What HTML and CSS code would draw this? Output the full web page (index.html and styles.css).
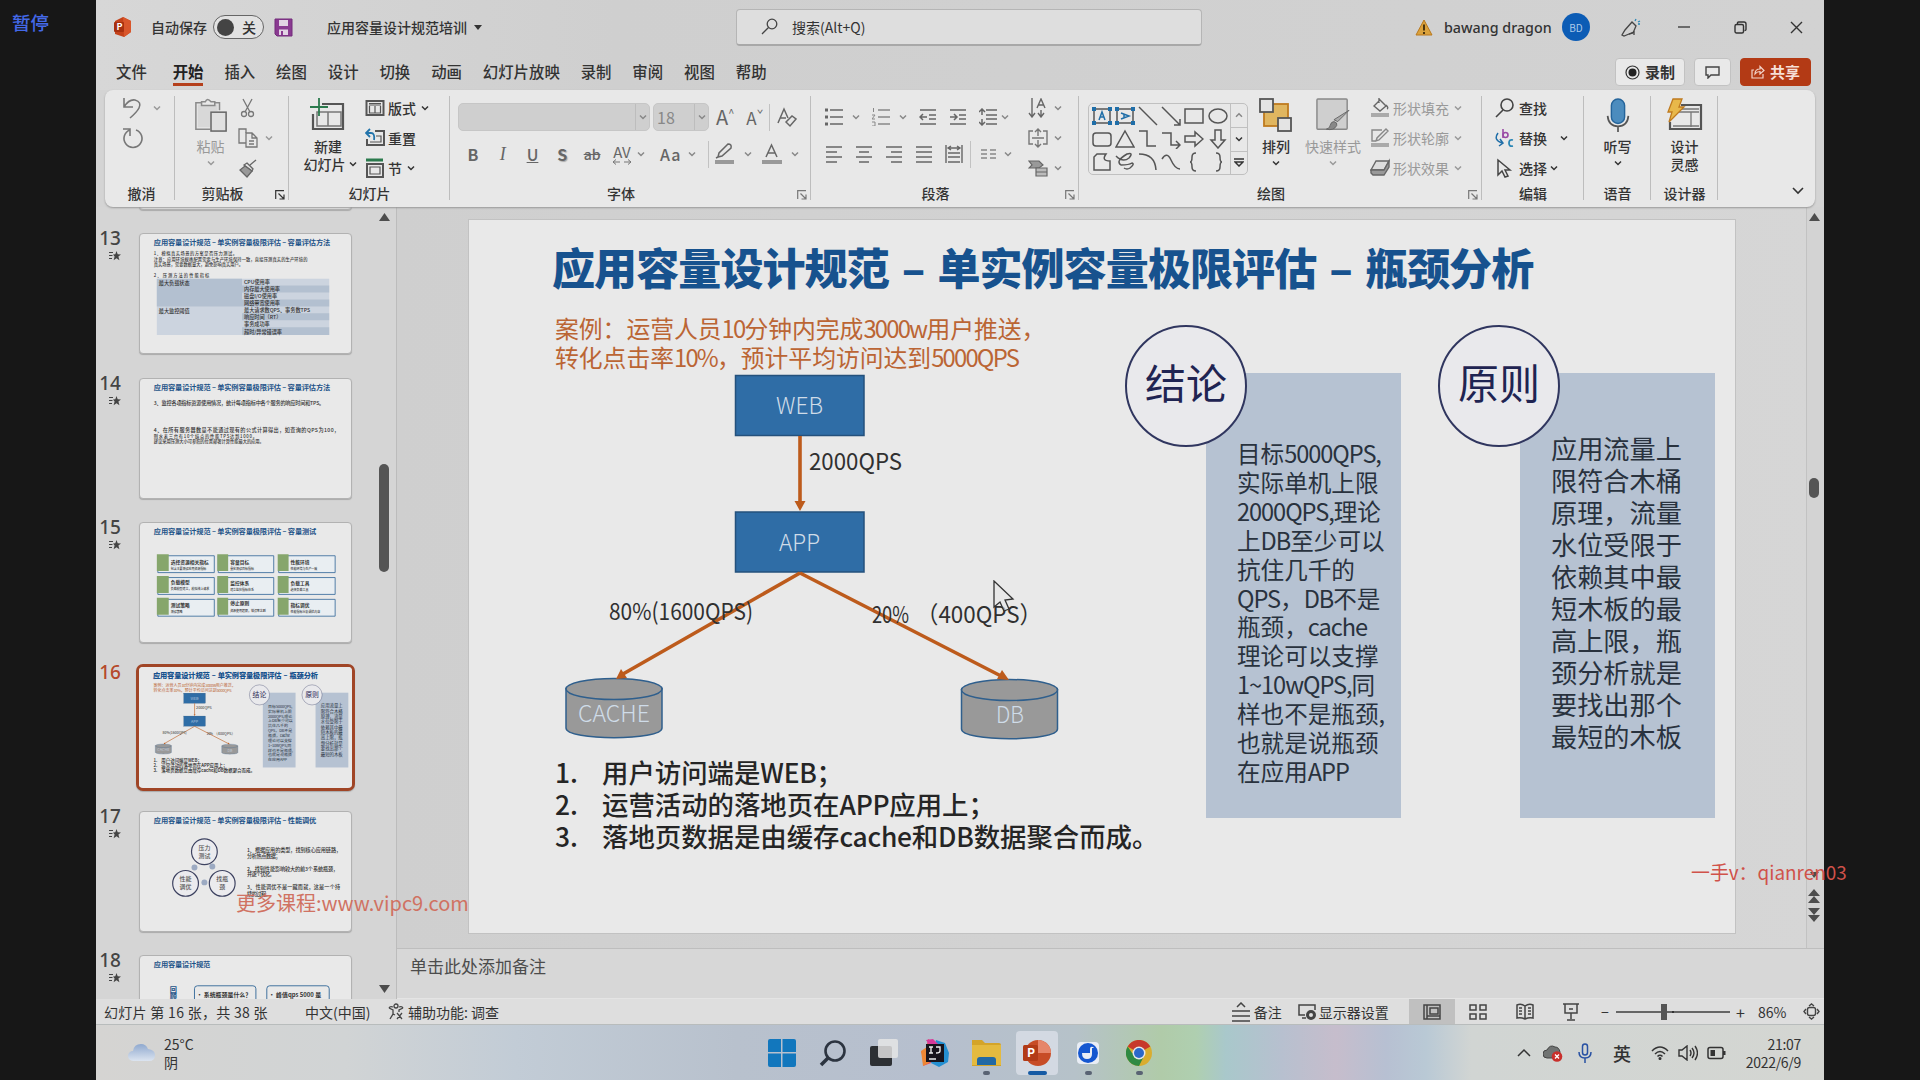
FILE: index.html
```html
<!DOCTYPE html>
<html lang="zh-CN">
<head>
    <meta charset="UTF-8">
    <meta name="viewport" content="width=device-width, initial-scale=1.0">
    <title>应用容量设计规范培训</title>
    <link rel="stylesheet" href="styles.css">
</head>
<body>

    <!-- shared symbols -->
    <svg class="defs">
        <symbol id="chev" viewBox="0 0 8 8"><path d="M1 2.5 4 5.5 7 2.5" fill="none" stroke="currentColor" stroke-width="1.5"/></symbol>
        <symbol id="launch" viewBox="0 0 10 10"><path d="M.7 9V.7H9M3.5 3.5l5 5M9 4.5V9H4.5" fill="none" stroke="currentColor" stroke-width="1.2"/></symbol>
        <symbol id="star" viewBox="0 0 12 10"><path d="M7.5 0l1.2 3.2 3.3.2-2.6 2.1 1 3.7-2.9-2-2.9 2 1-3.7L4 3.4l2.3-.2z" fill="currentColor"/><path d="M0 1.5h4M0 4.5h3.5M0 7.5h3" stroke="currentColor" stroke-width="1"/></symbol>
    </svg>

    <div class="window">
        <header class="titlebar">
            <div class="title-left">
                <svg class="logo" width="20" height="20" viewBox="0 0 20 20"><path d="M10 0l8 4v11l-7 5-9-3V4z" fill="#c4421a"/><path d="M10 0l8 4v11l-7 5z" fill="#d9562b"/><rect x="1" y="5" width="10" height="10" rx="1" fill="#a8300f"/><text x="3.4" y="13.2" font-size="9" font-weight="700" fill="#fff">P</text></svg>
                <span class="autosave">自动保存</span>
                <span class="toggle"><i></i>关</span>
                <svg class="save" width="19" height="19" viewBox="0 0 19 19"><path d="M1 1h17v17H3l-2-2z" fill="#8a3a91" stroke="#722a7a"/><path d="M5 2h9v6H5zM5 11.500h9V17H5z" fill="#e2d3e4"/><path d="M7 13h2v4H7z" fill="#8a3a91"/></svg>
                <span class="doc-name">应用容量设计规范培训</span>
                <svg width="8" height="5" viewBox="0 0 8 5"><path d="M0 0h8L4 5z" fill="#333"/></svg>
            </div>
            <div class="search">
                <svg width="17" height="17" viewBox="0 0 17 17" fill="none" stroke="#444" stroke-width="1.3"><circle cx="11" cy="6" r="4.8"/><path d="M7.500 9.500L1 16"/></svg>
                <span>搜索(Alt+Q)</span>
            </div>
            <div class="title-right">
                <svg class="warn" width="18" height="17" viewBox="0 0 18 17"><path d="M9 1l8 15H1z" fill="#dba23c" stroke="#b9791f"/><path d="M9 5.500v6M9 13v2" stroke="#3c2a0b" stroke-width="1.800"/></svg>
                <span class="user">bawang dragon</span>
                <span class="avatar">BD</span>
                <svg class="pen" width="20" height="19" viewBox="0 0 20 19" fill="none" stroke="#444" stroke-width="1.300"><path d="M11 4l4 4-3 7-4 1-5 2-2-1 3-5z"/><path d="M8 16l5-2v3"/><path d="M14 3l1-2M17 4l2-1M17 6h2" stroke="#2a86b5"/></svg>
                <svg class="min" width="12" height="12" viewBox="0 0 12 12"><path d="M0 6h12" stroke="#333" stroke-width="1.300"/></svg>
                <svg class="max" width="13" height="13" viewBox="0 0 13 13" fill="none" stroke="#333" stroke-width="1.400"><rect x="1" y="3.500" width="8.500" height="8.500" rx="1.500"/><path d="M3.500 3V2q0-1 1-1H10q2 0 2 2v5.500q0 1-1.500 1"/></svg>
                <svg width="13" height="13" viewBox="0 0 13 13"><path d="M1 1l11 11M12 1L1 12" stroke="#333" stroke-width="1.400"/></svg>
            </div>
        </header>

        <nav class="tabs">
            <span>文件</span>
            <span class="active">开始</span>
            <span>插入</span>
            <span>绘图</span>
            <span>设计</span>
            <span>切换</span>
            <span>动画</span>
            <span>幻灯片放映</span>
            <span>录制</span>
            <span>审阅</span>
            <span>视图</span>
            <span>帮助</span>
            <div class="tab-actions">
                <button class="rec"><svg width="15" height="15" viewBox="0 0 15 15"><circle cx="7.500" cy="7.500" r="6.500" fill="none" stroke="#333" stroke-width="1.200"/><circle cx="7.500" cy="7.500" r="4" fill="#222"/></svg>录制</button>
                <button class="comment"><svg width="15" height="13" viewBox="0 0 15 13"><path d="M1 1h13v8H6l-3 3V9H1z" fill="none" stroke="#444" stroke-width="1.400"/></svg></button>
                <button class="share"><svg width="14" height="14" viewBox="0 0 14 14" fill="none" stroke="#f3d6cc" stroke-width="1.200"><path d="M3 5H1v8h11V9M4 9q0-5 5-5V1.500L13 5.500 9 9V6.500Q6 6.500 4 9z"/></svg>共享</button>
            </div>
        </nav>

        <section class="ribbon">
            <div class="group g-undo">
                <div class="body">
                    <div class="row gray"><svg width="20" height="22" viewBox="0 0 20 22" fill="none" stroke="#777" stroke-width="1.600"><path d="M2 1v9h9M2 10q5-8 11-7 7 2 4 8-2 4-9 10"/></svg><svg class="ch"><use href="#chev"/></svg></div>
                    <div class="row"><svg width="22" height="22" viewBox="0 0 22 22" fill="none" stroke="#777" stroke-width="1.600"><path d="M1 2h7v7M8 3a9 9 0 1 0 6 0"/></svg></div>
                </div>
                <div class="label">撤消</div>
            </div>

            <div class="group g-clip">
                <div class="body">
                    <div class="big gray">
                        <svg width="34" height="36" viewBox="0 0 34 36" fill="none" stroke="#8a8a8a" stroke-width="1.600"><path d="M7 5H1v28h15M21 5h5v8"/><path d="M3 7h21v7h-8v17H3z" fill="#d8d8d8" stroke="none"/><path d="M7 8V4h4q2-5 6 0h4v4z" fill="#e8e8e8"/><rect x="17" y="15" width="16" height="20" fill="#e0e0e0" stroke="#666"/></svg>
                        <span>粘贴</span>
                        <svg class="ch"><use href="#chev"/></svg>
                    </div>
                    <div class="col">
                        <div class="row"><svg class="ic" viewBox="0 0 20 20" fill="none" stroke="#777" stroke-width="1.300"><path d="M5 1l7 13M14 1L7 14"/><circle cx="6" cy="16" r="2.500"/><circle cx="13" cy="16" r="2.500"/></svg></div>
                        <div class="row gray"><svg class="ic" viewBox="0 0 20 20" fill="none" stroke="#777" stroke-width="1.300"><path d="M8 15H1V1h7v4"/><path d="M8 5h6l5 5v9H8zM14 5v5h5M11 13h5M11 16h5"/></svg><svg class="ch"><use href="#chev"/></svg></div>
                        <div class="row"><svg class="ic" viewBox="0 0 20 20" stroke="#666" stroke-width="1.300"><path d="M18 2l-6 5M9 5l6 6-1 2-8-6z" fill="#e8e8e8"/><path d="M7 8l7 5-5 6-7-7z" fill="#999"/></svg></div>
                    </div>
                </div>
                <div class="label">剪贴板<svg class="launcher"><use href="#launch"/></svg></div>
            </div>

            <div class="group g-slides">
                <div class="body">
                    <div class="big">
                        <svg width="36" height="34" viewBox="0 0 36 34" fill="none"><path d="M12 6h21v25H3V16" stroke="#555" stroke-width="2.200"/><path d="M7 14h24v14H7zM18 14v14" stroke="#777" stroke-width="1.500"/><path d="M9 0v18M0 9h18" stroke="#2b7a4d" stroke-width="1.800"/></svg>
                        <span>新建</span>
                        <span class="nw">幻灯片<svg class="ch"><use href="#chev"/></svg></span>
                    </div>
                    <div class="col">
                        <div class="row"><svg class="ic" viewBox="0 0 20 20" fill="none" stroke="#555"><rect x="1.500" y="3" width="17" height="14" stroke-width="2"/><path d="M4 7h12M4 5.500h12M10 8v7M4.500 8v7h11V8" stroke-width="1.200"/></svg>版式<svg class="ch"><use href="#chev"/></svg></div>
                        <div class="row"><svg class="ic" viewBox="0 0 20 20" fill="none" stroke="#555"><path d="M10 3h9v14H2v-6" stroke-width="2"/><path d="M11 8h5v6H5" stroke-width="1.200"/><path d="M5 1L1 5l4 4M1 5h5q4 0 3 7" stroke="#2274ab" stroke-width="1.800"/></svg>重置</div>
                        <div class="row"><svg class="ic" viewBox="0 0 20 20" fill="none" stroke="#555"><path d="M1 2h17" stroke="#2b7a4d" stroke-width="3"/><path d="M2 6h16v13H2z" stroke-width="2"/><path d="M5 9h10v7H5z" stroke-width="1.200"/></svg>节<svg class="ch"><use href="#chev"/></svg></div>
                    </div>
                </div>
                <div class="label">幻灯片</div>
            </div>

            <div class="group g-font">
                <div class="body">
                    <div class="line first">
                        <div class="combo font-name"><i></i><svg class="ch"><use href="#chev"/></svg></div>
                        <div class="combo font-size"><span>18</span><i></i><svg class="ch"><use href="#chev"/></svg></div>
                        <span class="grow">A<small>^</small></span>
                        <span class="shrink">A<small>ˇ</small></span>
                        <i class="bar"></i>
                        <svg class="clear" width="20" height="21" viewBox="0 0 20 21" fill="none" stroke="#666" stroke-width="1.500"><path d="M1 16L7 2l4 9M3 11h6"/><path d="M9 15l6-6 4 3-6 7z"/></svg>
                    </div>
                    <div class="line second">
                        <b>B</b><em>I</em><u>U</u><b class="shadow">S</b><s>ab</s>
                        <span class="av">AV<svg width="20" height="6" viewBox="0 0 20 6"><path d="M8 3H1M4 .5L1 3l3 2.500M12 3h7M16 .5L19 3l-3 2.500" fill="none" stroke="#777"/></svg></span><svg class="ch"><use href="#chev"/></svg>
                        <span class="aa">Aa</span><svg class="ch"><use href="#chev"/></svg>
                        <i class="bar"></i>
                        <svg width="22" height="22" viewBox="0 0 22 22"><path d="M4 14l1-4 9-9q4 0 3 4l-9 8-4 1-2 1z" fill="none" stroke="#666" stroke-width="1.500"/><path d="M1 17h19v4H1z" fill="#999"/></svg><svg class="ch wide"><use href="#chev"/></svg>
                        <svg width="22" height="22" viewBox="0 0 22 22"><path d="M5 14L10.500 2 16 14M7 10h7" fill="none" stroke="#666" stroke-width="1.500"/><path d="M1 17h20v4H1z" fill="#999"/></svg><svg class="ch wide"><use href="#chev"/></svg>
                    </div>
                </div>
                <div class="label">字体<svg class="launcher"><use href="#launch"/></svg></div>
            </div>

            <div class="group g-para">
                <div class="body">
                    <div class="lines">
                        <div class="line first">
                            <svg class="pi" viewBox="0 0 18 18" stroke="#666" stroke-width="1.600"><path d="M5 2h13M5 9h13M5 16h13"/><path d="M0 2h3M0 9h3M0 16h3" stroke-width="3"/></svg><svg class="ch"><use href="#chev"/></svg>
                            <svg class="pi" viewBox="0 0 18 18" stroke="#888" stroke-width="1.600"><path d="M6 2h12M6 9h12M6 16h12"/><path d="M1.500 0v4M0 7h3L0 11h3M0 14h3v4H0" stroke-width="1" fill="none"/></svg><svg class="ch"><use href="#chev"/></svg>
                            <svg class="pi" viewBox="0 0 18 18" stroke="#666" stroke-width="1.500" fill="none"><path d="M1 2h16M10 7h7M10 11h7M1 16h16M8 9H1M4 6L1 9l3 3"/></svg>
                            <svg class="pi" viewBox="0 0 18 18" stroke="#666" stroke-width="1.500" fill="none"><path d="M1 2h16M10 7h7M10 11h7M1 16h16M1 9h7M5 6l3 3-3 3"/></svg>
                            <svg class="pi" viewBox="0 0 18 18" stroke="#666" stroke-width="1.500" fill="none"><path d="M7 2h11M7 7h11M7 11h11M7 16h11M3 1v6M3 11v6M0 4l3-3 3 3M0 14l3 3 3-3"/></svg><svg class="ch near"><use href="#chev"/></svg>
                        </div>
                        <div class="line second">
                            <svg class="pi" viewBox="0 0 18 18" stroke="#666" stroke-width="1.600"><path d="M1 2h16M1 7h11M1 12h16M1 17h11"/></svg>
                            <svg class="pi" viewBox="0 0 18 18" stroke="#666" stroke-width="1.600"><path d="M1 2h16M4 7h10M1 12h16M4 17h10"/></svg>
                            <svg class="pi" viewBox="0 0 18 18" stroke="#666" stroke-width="1.600"><path d="M1 2h16M6 7h11M1 12h16M6 17h11"/></svg>
                            <svg class="pi" viewBox="0 0 18 18" stroke="#666" stroke-width="1.600"><path d="M1 2h16M1 7h16M1 12h16M1 17h16"/></svg>
                            <svg class="pi" viewBox="0 0 18 18" stroke="#666" stroke-width="1.400" fill="none"><path d="M1 0v18M17 0v18M3 8h12M3 12h12M3 17h12M3 3h12M6 1L3 3l3 2M12 1l3 2-3 2"/></svg>
                            <i class="bar"></i>
                            <svg class="pi" viewBox="0 0 18 18" stroke="#888" stroke-width="1.500"><path d="M1 5h6M1 9h6M1 13h6M10 5h6M10 9h6M10 13h6"/></svg><svg class="ch near"><use href="#chev"/></svg>
                        </div>
                    </div>
                    <div class="col gray">
                        <div class="row"><svg class="ic" viewBox="0 0 20 20" fill="none" stroke="#666" stroke-width="1.400"><path d="M4 0v18M1 15l3 4 3-4M9 10l4-9 4 9M10 7h6M13 12v6M10 15l3 4 3-4"/></svg><svg class="ch"><use href="#chev"/></svg></div>
                        <div class="row"><svg class="ic" viewBox="0 0 20 20" fill="none" stroke="#777" stroke-width="1.400"><path d="M5 3H1v13h4M15 3h4v13h-4M4 10h12M10 1v7M10 12v7M7 4l3-3 3 3M7 16l3 3 3-3"/></svg><svg class="ch"><use href="#chev"/></svg></div>
                        <div class="row"><svg class="ic" viewBox="0 0 20 20" fill="#999" stroke="#666" stroke-width="1.200"><path d="M1 3h10l4 4-4 3H1l3-3z"/><path d="M8 10h11v8H8zM8 14h11" fill="#bbb"/></svg><svg class="ch"><use href="#chev"/></svg></div>
                    </div>
                </div>
                <div class="label">段落<svg class="launcher"><use href="#launch"/></svg></div>
            </div>

            <div class="group g-draw">
                <div class="body">
                    <div class="gallery">
                        <div class="shapes">
                            <svg class="tb" viewBox="0 0 20 20"><rect x="2" y="3" width="16" height="14"/><path d="M7 14l3-8 3 8M8 11h4"/><path d="M0 3h4M16 3h4M0 17h4M16 17h4" stroke-width="4"/></svg>
                            <svg class="tb" viewBox="0 0 20 20"><rect x="2" y="3" width="16" height="14"/><path d="M6 7l8 3-8 3M9 8v4"/><path d="M0 3h4M16 3h4M0 17h4M16 17h4" stroke-width="4"/></svg>
                            <svg viewBox="0 0 20 20"><path d="M1 1l18 18"/></svg>
                            <svg viewBox="0 0 20 20"><path d="M1 1l18 18M19 13v6h-6"/></svg>
                            <svg viewBox="0 0 20 20"><rect x="1" y="3" width="18" height="14"/></svg>
                            <svg viewBox="0 0 20 20"><ellipse cx="10" cy="10" rx="9" ry="7"/></svg>
                            <svg viewBox="0 0 20 20"><rect x="1" y="4" width="18" height="13" rx="3"/></svg>
                            <svg viewBox="0 0 20 20"><path d="M10 2l9 16H1z"/></svg>
                            <svg viewBox="0 0 20 20"><path d="M1 2h8v15h9"/></svg>
                            <svg viewBox="0 0 20 20"><path d="M1 4h9v12h9M15 12l4 4-4 4"/></svg>
                            <svg viewBox="0 0 20 20"><path d="M1 7h10V3l8 7-8 7v-4H1z"/></svg>
                            <svg viewBox="0 0 20 20"><path d="M7 1v10H3l7 8 7-8h-4V1z"/></svg>
                            <svg viewBox="0 0 20 20"><path d="M2 18V5l3-3h9q-5 7 4 7v9z"/></svg>
                            <svg viewBox="0 0 20 20"><path d="M1 4q7 7 13 2 5-6-2-4-12 7-6 11 8 0 11-2 3 1-2 5-3 2-6 0"/></svg>
                            <svg viewBox="0 0 20 20"><path d="M1 2q16 0 17 16"/></svg>
                            <svg viewBox="0 0 20 20"><path d="M1 7q5-8 9 1 4 9 9 9"/></svg>
                            <svg viewBox="0 0 20 20"><path d="M12 1q-4 0-4 4 0 5-2 5 2 0 2 5 0 4 4 4"/></svg>
                            <svg viewBox="0 0 20 20"><path d="M8 1q4 0 4 4 0 5 2 5-2 0-2 5 0 4-4 4"/></svg>
                        </div>
                        <div class="scroller">
                            <span class="up"><svg class="ch"><use href="#chev"/></svg></span>
                            <span><svg class="ch"><use href="#chev"/></svg></span>
                            <span><svg width="10" height="9" viewBox="0 0 10 9" fill="none" stroke="#333" stroke-width="1.500"><path d="M0 1h10M1 4h8L5 8z"/></svg></span>
                        </div>
                    </div>
                    <div class="big arrange">
                        <svg width="34" height="34" viewBox="0 0 34 34" stroke-width="1.800"><rect x="5" y="6" width="24" height="22" fill="#e0b660" stroke="#bf7a1e"/><rect x="1" y="1" width="13" height="13" fill="#e4e4e4" stroke="#555"/><rect x="19" y="20" width="13" height="13" fill="#e4e4e4" stroke="#555"/></svg>
                        <span>排列</span>
                        <svg class="ch"><use href="#chev"/></svg>
                    </div>
                    <div class="big quick gray">
                        <svg width="36" height="36" viewBox="0 0 36 36"><rect x="1" y="1" width="32" height="32" rx="1" fill="#cfcfcf" stroke="#888" stroke-width="1.500"/><path d="M35 13L23 25l-4-2z" fill="#aaa" stroke="#666"/><path d="M19 25q4 1 3 4-3 6-11 4 4-1 4-4 1-4 4-4z" fill="#888" stroke="#666"/></svg>
                        <span>快速样式</span>
                        <svg class="ch"><use href="#chev"/></svg>
                    </div>
                    <div class="col gray">
                        <div class="row"><svg class="ic" viewBox="0 0 20 20"><path d="M4 8l6-6 6 6-6 5zM9 5V0M16 7q3 3 1 4" fill="none" stroke="#666" stroke-width="1.400"/><path d="M1 15h18v4H1z" fill="#aaa"/></svg>形状填充<svg class="ch"><use href="#chev"/></svg></div>
                        <div class="row"><svg class="ic" viewBox="0 0 20 20"><path d="M12 2H2v11h4M18 3L9 12l-3 1 1-3 9-9z" fill="none" stroke="#888" stroke-width="1.400"/><path d="M1 15h18v4H1z" fill="#aaa"/></svg>形状轮廓<svg class="ch"><use href="#chev"/></svg></div>
                        <div class="row"><svg class="ic" viewBox="0 0 20 20" stroke="#666" stroke-width="1.400"><path d="M1 12l5-9h13l-5 9z" fill="#ddd"/><path d="M1 12h13l5-9v6l-5 8H3l-2-2z" fill="#999"/></svg>形状效果<svg class="ch"><use href="#chev"/></svg></div>
                    </div>
                </div>
                <div class="label">绘图<svg class="launcher"><use href="#launch"/></svg></div>
            </div>

            <div class="group g-edit">
                <div class="body">
                    <div class="col">
                        <div class="row"><svg class="ic" viewBox="0 0 20 20" fill="none" stroke="#444" stroke-width="1.600"><circle cx="12" cy="7" r="6"/><path d="M8 12l-7 7"/></svg>查找</div>
                        <div class="row"><svg class="ic" viewBox="0 0 20 20" fill="none"><path d="M8 1v9" stroke="#9a4ba5" stroke-width="1.600"/><circle cx="10.500" cy="7" r="2.500" stroke="#9a4ba5" stroke-width="1.600"/><path d="M18 12q-4-1-4 3t4 3" stroke="#2a86b5" stroke-width="1.800"/><path d="M3 5q-5 7 4 10M5 11l3 4-4 3" stroke="#1f6ea8" stroke-width="1.500"/></svg>替换<svg class="ch far"><use href="#chev"/></svg></div>
                        <div class="row"><svg class="ic" viewBox="0 0 20 20" fill="none" stroke="#444" stroke-width="1.500"><path d="M3 2v15l4-4 3 6 3-1-3-6h5z"/></svg>选择<svg class="ch"><use href="#chev"/></svg></div>
                    </div>
                </div>
                <div class="label">编辑</div>
            </div>

            <div class="group g-voice">
                <div class="body">
                    <div class="big">
                        <svg width="24" height="36" viewBox="0 0 24 36" fill="none"><rect x="5" y="1" width="14" height="26" rx="7" fill="#4c8cbe" stroke="#24649b" stroke-width="1.500"/><path d="M1 19q1 11 11 11t11-11M12 30v6" stroke="#555" stroke-width="1.800"/></svg>
                        <span>听写</span>
                        <svg class="ch"><use href="#chev"/></svg>
                    </div>
                </div>
                <div class="label">语音</div>
            </div>

            <div class="group g-designer">
                <div class="body">
                    <div class="big">
                        <svg width="36" height="34" viewBox="0 0 36 34" fill="none"><path d="M14 7h20v24H3v-7" stroke="#555" stroke-width="2.200"/><path d="M12 14h20M24 14v15M6 28h26M13 11h19" stroke="#777" stroke-width="1.300"/><path d="M6 1h9l-3 8h5L2 24l3-10H1z" fill="#e8b84a" stroke="#bf7a1e" stroke-width="1.300"/></svg>
                        <span>设计</span>
                        <span>灵感</span>
                    </div>
                </div>
                <div class="label">设计器</div>
            </div>

            <svg class="collapse" width="12" height="8" viewBox="0 0 12 8"><path d="M1 1l5 5 5-5" fill="none" stroke="#333" stroke-width="1.600"/></svg>
        </section>

        <main class="work">
            <aside class="thumbs">
                <ol class="thumb-list">
                    <li class="item"><div class="num"></div><div class="thumb"></div></li>
                    <li class="item">
                        <div class="num">13<svg><use href="#star"/></svg></div>
                        <div class="thumb">
                            <svg viewBox="0 0 213 121">
                                <text class="t" x="14" y="11" textLength="178">应用容量设计规范 – 单实例容量极限评估 – 容量评估方法</text>
                                <text x="14" y="21" textLength="84">1、模拟真实场景的方案是否压力测试。</text>
                                <text x="14" y="27" textLength="155">注意：应用环境规格配置需要与生产环境保持一致，直接压测真实的生产环境的</text>
                                <text x="14" y="32.500" textLength="90">真实场景，需要数据量大，避免影响真实用户。</text>
                                <text x="14" y="43" textLength="56">2、压测方法的性能指标</text>
                                <path d="M17 45h174v57H17z" fill="#ccd4df"/>
                                <path d="M17 45h86v28H17zM103 52h88v7h-88zM103 66h88v7h-88zM103 80h88v7h-88zM103 94h88v8h-88z" fill="#b3c0d0"/>
                                <g class="cells">
                                    <text x="19" y="51">最大负载状态</text><text x="19" y="80">最大监控阈值</text>
                                    <text x="105" y="50">CPU使用率</text><text x="105" y="57">内存最大使用率</text><text x="105" y="65">磁盘I/O使用率</text><text x="105" y="72">网络带宽使用率</text>
                                    <text x="105" y="79">最大请求数QPS、事务数TPS</text><text x="105" y="86">响应时间（RT）</text><text x="105" y="93">事务成功率</text><text x="105" y="100.500">超时/异常错误率</text>
                                </g>
                            </svg>
                        </div>
                    </li>
                    <li class="item">
                        <div class="num">14<svg><use href="#star"/></svg></div>
                        <div class="thumb">
                            <svg viewBox="0 0 213 121">
                                <text class="t" x="14" y="11" textLength="178">应用容量设计规范 – 单实例容量极限评估 – 容量评估方法</text>
                                <g class="wide-text">
                                    <text x="14" y="26.500" textLength="172">3、监控各项指标资源使用情况，统计每项指标中各个服务的响应时间和TPS。</text>
                                    <text x="14" y="53" textLength="187">4、在所有服务器数量不能通过现有的公式计算得出，如查询的QPS为100，</text>
                                </g>
                                <text x="14" y="59" textLength="104">则水表三台有10个结点的性能TPS达到1000。</text>
                                <text x="14" y="65" textLength="111">建议采用压测大小可参照的位置部署计算性能最大的应用。</text>
                            </svg>
                        </div>
                    </li>
                    <li class="item">
                        <div class="num">15<svg><use href="#star"/></svg></div>
                        <div class="thumb">
                            <svg viewBox="0 0 213 121">
                                <text class="t" x="14" y="11" textLength="164">应用容量设计规范 – 单实例容量极限评估 – 容量测试</text>
                                <g fill="#e9eef2" stroke="#41729f" stroke-width=".9">
                                    <path d="M18 33h57v17H18zM79 33h56v17H79zM140 33h57v17h-57zM18 55h57v17H18zM79 55h56v17H79zM140 55h57v17h-57zM18 77h57v17H18zM79 77h56v17H79zM140 77h57v17h-57z"/>
                                </g>
                                <path d="M17 31.500h12v17H17zM78 31.500h11v17H78zM139 31.500h11v17h-11zM17 53.500h12v17H17zM78 53.500h11v17H78zM139 53.500h11v17h-11zM17 75.500h12v17H17zM78 75.500h11v17H78zM139 75.500h11v17h-11z" fill="#86a66c"/>
                                <g class="card">
                                    <text x="31" y="41">选择资源相关指标</text><text x="91" y="41">容量目标</text><text x="152" y="41">性能环境</text>
                                    <text x="31" y="62">负载模型</text><text x="91" y="63">监控体系</text><text x="152" y="63">负载工具</text>
                                    <text x="31" y="85">测试策略</text><text x="91" y="83">停止原则</text><text x="152" y="85">指标调优</text>
                                </g>
                                <g class="note">
                                    <text x="31" y="47.500">包含主要测试应用资源指标</text><text x="91" y="47.500">量化测试目标指标</text><text x="152" y="47.500">性能环境与生产一致</text>
                                    <text x="31" y="68">负载模型建立，模拟线上请求</text><text x="91" y="69">建立监控指标体系</text><text x="152" y="69">选择负载工具</text>
                                    <text x="31" y="91">测试策略</text><text x="91" y="90">资源使用超限，错误率达到</text><text x="152" y="91">性能指标分析调优内容</text>
                                </g>
                            </svg>
                        </div>
                    </li>
                    <li class="item current">
                        <div class="num">16</div>
                        <div class="thumb" id="thumb16"></div>
                    </li>
                    <li class="item">
                        <div class="num">17<svg><use href="#star"/></svg></div>
                        <div class="thumb">
                            <svg viewBox="0 0 213 121">
                                <text class="t" x="14" y="11" textLength="164">应用容量设计规范 – 单实例容量极限评估 – 性能调优</text>
                                <g fill="#ebebee" stroke="#3e4361" stroke-width="1.200"><circle cx="65" cy="40" r="13"/><circle cx="46" cy="72" r="13"/><circle cx="83" cy="72" r="13"/></g>
                                <g fill="#9caac2"><circle cx="55" cy="56" r="3"/><circle cx="73" cy="55" r="3"/><circle cx="65" cy="71" r="3"/></g>
                                <g class="ring"><text x="59" y="38">压力</text><text x="59" y="46">测试</text><text x="40" y="70">性能</text><text x="40" y="78">调优</text><text x="77" y="70">找瓶</text><text x="80" y="78">颈</text></g>
                                <g class="wide-text">
                                    <text x="108" y="40" textLength="95">1、根据应用的类型，找到核心应用链路，</text><text x="108" y="46" textLength="34">分析热点数据；</text>
                                    <text x="108" y="59" textLength="92">2、找到性能影响较大的前3个系统瓶颈，</text><text x="108" y="65" textLength="28">并逐个优化。</text>
                                    <text x="108" y="78" textLength="94">3、性能调优不是一蹴而就，这是一个持</text><text x="108" y="85" textLength="24">续的过程。</text>
                                </g>
                            </svg>
                        </div>
                    </li>
                    <li class="item">
                        <div class="num">18<svg><use href="#star"/></svg></div>
                        <div class="thumb">
                            <svg viewBox="0 0 213 121">
                                <text class="t" x="14" y="11" textLength="57">应用容量设计规范</text>
                                <g fill="none" stroke="#41729f"><rect x="55" y="30" width="62" height="40" rx="3"/><rect x="128" y="30" width="63" height="40" rx="3"/></g>
                                <text class="t" x="30" y="36">回</text><text class="t" x="30" y="43">顾</text>
                                <g class="q"><text x="57" y="41">• 系统瓶颈是什么？</text><text x="130" y="41">• 峰值qps 5000 是</text></g>
                            </svg>
                        </div>
                    </li>
                </ol>
                <div class="scroll left-scroll"><svg width="11" height="8" viewBox="0 0 11 8"><path d="M0 8L5.500 0 11 8z"/></svg><i></i><svg width="11" height="8" viewBox="0 0 11 8"><path d="M0 0h11L5.500 8z"/></svg></div>
            </aside>

            <section class="editor">
                <div class="canvas">
                    <article class="slide" id="slide">
                        <h1>应用容量设计规范 – 单实例容量极限评估 – 瓶颈分析</h1>
                        <p class="case">案例：运营人员<span>10</span>分钟内完成<span>3000w</span>用户推送，<br>转化点击率<span>10%</span>，预计平均访问达到<span>5000QPS</span></p>
                        <svg class="diagram" width="1265" height="712" viewBox="0 0 1265 712">
                            <g fill="#2f6da6" stroke="#24517c" stroke-width="1.500"><rect x="266.500" y="155.500" width="128.500" height="60"/><rect x="266.500" y="292" width="128.500" height="60"/></g>
                            <g fill="#999" stroke="#2f5f8d" stroke-width="1.500">
                                <path d="M97 468v40c0 13 96 13 96 0v-40"/><ellipse cx="145" cy="469" rx="48" ry="10.500"/>
                                <path d="M492.500 469v40c0 13 96 13 96 0v-40"/><ellipse cx="540.500" cy="470" rx="48" ry="10.500"/>
                            </g>
                            <g stroke="#bd5b1c" stroke-width="3.600" fill="#bd5b1c">
                                <path d="M331 216v66M331 353L154 454M331 353L532 456"/>
                                <path d="M331 291l-5.500-10h11zM147 459l5-10 6 9zM540 460l-12-1 5-9z" stroke="none"/>
                            </g>
                            <g class="node">
                                <text x="307" y="194" textLength="47" lengthAdjust="spacingAndGlyphs">WEB</text>
                                <text x="310" y="331" textLength="41" lengthAdjust="spacingAndGlyphs">APP</text>
                                <text x="109" y="502" textLength="72" lengthAdjust="spacingAndGlyphs">CACHE</text>
                                <text x="527" y="503" textLength="28" lengthAdjust="spacingAndGlyphs">DB</text>
                            </g>
                            <g class="edge">
                                <text x="340" y="250" textLength="93" lengthAdjust="spacingAndGlyphs">2000QPS</text>
                                <text x="140" y="400" textLength="144" lengthAdjust="spacingAndGlyphs">80%(1600QPS)</text>
                                <text x="403" y="403" textLength="37" lengthAdjust="spacingAndGlyphs">20%</text>
                                <text x="447" y="403" textLength="126" lengthAdjust="spacingAndGlyphs">（400QPS）</text>
                            </g>
                        </svg>
                        <ol class="points">
                            <li>用户访问端是<span>WEB</span>；</li>
                            <li>运营活动的落地页在<span>APP</span>应用上；</li>
                            <li>落地页数据是由缓存<span>cache</span>和<span>DB</span>数据聚合而成。</li>
                        </ol>
                        <div class="panel result">目标<span>5000QPS,</span><br>实际单机上限<br><span>2000QPS,</span>理论<br>上<span>DB</span>至少可以<br>抗住几千的<br><span>QPS</span>，<span>DB</span>不是<br>瓶颈，<span>cache</span><br>理论可以支撑<br><span>1~10wQPS,</span>同<br>样也不是瓶颈,<br>也就是说瓶颈<br>在应用<span>APP</span></div>
                        <div class="panel rule">应用流量上<br>限符合木桶<br>原理，流量<br>水位受限于<br>依赖其中最<br>短木板的最<br>高上限，瓶<br>颈分析就是<br>要找出那个<br>最短的木板</div>
                        <div class="disc d1">结论</div>
                        <div class="disc d2">原则</div>
                    </article>
                    <div class="scroll right-scroll"><svg width="11" height="8" viewBox="0 0 11 8"><path d="M0 8L5.500 0 11 8z"/></svg><i></i><svg class="pages" width="12" height="52" viewBox="0 0 12 52"><path d="M2 0h9L6 6zM0 24l6-7 6 7zM0 31l6-7 6 7zM0 36h12l-6 7zM0 43h12l-6 7z"/></svg></div>
                </div>
                <div class="notes">单击此处添加备注</div>
            </section>
        </main>

        <footer class="status">
            <span class="page-no">幻灯片 第 16 张，共 38 张</span>
            <span class="lang">中文(中国)</span>
            <svg class="acc" width="16" height="17" viewBox="0 0 16 17" fill="none" stroke="#444" stroke-width="1.300"><circle cx="8" cy="3" r="2"/><path d="M1 5l4 2v4l-3 5M15 5l-4 2v2M5 11l2 1M9 10l5 6M14 10l-5 6M1 5q1-2 4-1M15 5q-1-2-4-1"/></svg>
            <span>辅助功能: 调查</span>
            <div class="status-right">
                <svg class="s-notes" width="20" height="20" viewBox="0 0 20 20" fill="none" stroke="#444" stroke-width="1.500"><path d="M6 5l4-4 4 4M1 9h18M1 14h18M1 19h18"/></svg><span class="t-notes">备注</span>
                <svg class="s-disp" width="19" height="18" viewBox="0 0 19 18" fill="none" stroke="#444" stroke-width="1.500"><path d="M7 12H1V2h16v5M4 15h4"/><circle cx="13" cy="12" r="3.500" stroke-width="3"/></svg><span class="t-disp">显示器设置</span>
                <i class="view on"><svg width="18" height="16" viewBox="0 0 18 16"><path d="M1 1h16v14H1zM4 1v14M7 4h8v6H7zM4 12h13"/></svg></i>
                <i class="view"><svg width="18" height="18" viewBox="0 0 18 18"><path d="M1 2h6v5H1zM11 2h6v5h-6zM1 11h6v5H1zM11 11h6v5h-6z"/></svg></i>
                <i class="view"><svg width="18" height="18" viewBox="0 0 18 18"><path d="M9 3Q5 0 1 2v13q4-1 8 1 4-2 8-1V2q-4-2-8 1zv13M3 5h3M3 8h3M3 11h3M12 5h3M12 8h3M12 11h3"/></svg></i>
                <i class="view"><svg width="18" height="18" viewBox="0 0 18 18"><path d="M1 1h16M3 1v9h12V1M9 10v6M5 17h8M7 6h4"/></svg></i>
                <span class="minus">−</span>
                <div class="zoom-track"><i></i></div>
                <span class="plus">+</span>
                <span class="pct">86%</span>
                <svg class="fit" width="17" height="17" viewBox="0 0 17 17" fill="none" stroke="#444" stroke-width="1.400"><rect x="4.500" y="4.500" width="8" height="8" rx="2"/><path d="M6 3l2.500-2L11 3M6 14l2.500 2 2.500-2M3 6L1 8.500 3 11M14 6l2 2.500-2 2.500"/></svg>
            </div>
        </footer>

        <div class="taskbar">
            <div class="weather">
                <svg width="28" height="19" viewBox="0 0 28 19"><defs><linearGradient id="cl" x2="0" y2="1"><stop stop-color="#8fa9cf"/><stop offset="1" stop-color="#dce4f0"/></linearGradient></defs><path d="M6 18a5 5 0 0 1 0-10q1-7 8-7 5 0 7 5 7 1 7 6 0 6-6 6z" fill="url(#cl)"/></svg>
                <div>25°C<br>阴</div>
            </div>
            <div class="apps">
                <span><svg width="28" height="28" viewBox="0 0 28 28"><path d="M0 2q0-2 2-2h11v13H0zM14.500 0H26q2 0 2 2v11H14.500zM0 14.500h13V28H2q-2 0-2-2zM14.500 14.500H28V26q0 2-2 2H14.500z" fill="#1277bd"/></svg></span>
                <span><svg width="28" height="28" viewBox="0 0 28 28" fill="none" stroke="#2c3440"><circle cx="16" cy="12" r="9.500" stroke-width="2.600"/><path d="M9 19l-7 7" stroke-width="3.500"/></svg></span>
                <span><svg width="28" height="28" viewBox="0 0 28 28"><rect x="0" y="7" width="22" height="20" rx="2" fill="#2d3034"/><rect x="8" y="0" width="20" height="19" rx="2" fill="#e6e6e6" opacity=".82"/></svg></span>
                <span><svg width="28" height="28" viewBox="0 0 28 28"><path d="M7 0l8 4-5 20-8 3 2-8-4-6 5-3z" fill="#e64b6b"/><path d="M0 12l6-4 2 16-6 3z" fill="#ed8735"/><path d="M15 1l9 3 4 10-1 9-9 5-8-4z" fill="#248fd1"/><path d="M5 1l7-1 5 5-7 3z" fill="#d6399a"/><rect x="5" y="5" width="18" height="18" fill="#17141c"/><path d="M8 8h4M10 8v6M8 14h4M15 8h4v4q0 2-4 2M8 20h7" stroke="#eee" stroke-width="1.400" fill="none"/></svg></span>
                <span class="run"><svg width="29" height="27" viewBox="0 0 29 27"><path d="M0 1h10l3 3h14q2 0 2 2v21H0z" fill="#d4a429"/><path d="M0 6h29v20H0z" fill="#e4ba3f"/><path d="M5 26v-5q0-3 3-3h13q3 0 3 3v5z" fill="#2269a4"/></svg></span>
                <span class="run now"><svg width="28" height="28" viewBox="0 0 28 28"><circle cx="15" cy="14" r="13" fill="#c74c26"/><path d="M15 1a13 13 0 0 1 13 13H15z" fill="#e6866a"/><rect x="0" y="6" width="15" height="16" rx="1.500" fill="#b23b17"/><text x="4" y="18" font-size="12" font-weight="700" fill="#fff">P</text></svg></span>
                <span class="run"><svg width="22" height="22" viewBox="0 0 22 22"><rect width="22" height="22" rx="4" fill="#e9edf5"/><circle cx="11" cy="11" r="10" fill="#1557d0"/><path d="M5 11h8V7q0-3 3-2l1 1h-2v6q0 5-5 5t-5-6z" fill="#e9edf5"/></svg></span>
                <span class="run"><svg width="26" height="26" viewBox="0 0 26 26"><circle cx="13" cy="13" r="13" fill="#d9ad2f"/><path d="M13 13L1.700 6.500A13 13 0 0 1 24.300 6.500z" fill="#c7392c"/><path d="M13 13H6L1.700 6.500A13 13 0 0 0 13 26l5-10z" fill="#2f8a43"/><circle cx="13" cy="13" r="6.500" fill="#e8e8e8"/><circle cx="13" cy="13" r="5" fill="#2b68c9"/></svg></span>
            </div>
            <div class="tray">
                <svg width="14" height="9" viewBox="0 0 14 9"><path d="M1 8l6-6 6 6" fill="none" stroke="#333" stroke-width="1.500"/></svg>
                <svg class="onedrive" width="20" height="18" viewBox="0 0 20 18"><path d="M4 14a4 4 0 0 1 0-8q3-6 8-3 4 0 5 5-1 6-4 6z" fill="#707372" stroke="#444"/><circle cx="14" cy="12.500" r="5.300" fill="#c9302c"/><path d="M12 10.500l4 4M16 10.500l-4 4" stroke="#fff" stroke-width="1.300"/></svg>
                <svg class="mic" width="14" height="20" viewBox="0 0 14 20" fill="none" stroke="#2851a3" stroke-width="1.500"><rect x="4.500" y="1" width="5" height="11" rx="2.500"/><path d="M1 9q0 6 6 6t6-6M7 15v5"/></svg>
                <span class="ime">英</span>
                <svg class="wifi" width="18" height="14" viewBox="0 0 18 14" fill="none" stroke="#333" stroke-width="1.500"><path d="M1 5q8-8 16 0M4 8q5-5 10 0M6.500 10.500q2.500-2.500 5 0"/><circle cx="9" cy="12.500" r=".8"/></svg>
                <svg class="vol" width="20" height="16" viewBox="0 0 20 16" fill="none" stroke="#333" stroke-width="1.400"><path d="M1 5h3l5-4v14l-5-4H1zM12 5q2 3 0 6M14 3q4 5 0 10M17 1q5 7 0 14"/></svg>
                <svg class="bat" width="19" height="14" viewBox="0 0 19 14"><rect x="1" y="1.500" width="15" height="11" rx="2" fill="none" stroke="#333" stroke-width="1.500"/><path d="M3.500 4H8v6H3.500zM16 5h2.500v4H16z" fill="#333"/></svg>
                <div class="clock">21:07<br>2022/6/9</div>
            </div>
        </div>
    </div>

    <svg class="pointer" width="22" height="34" viewBox="0 0 22 34"><path d="M1 1v26l6-5 4 9 5-2-4-9 8-1z" fill="#e8e8e8" fill-opacity=".6" stroke="#333" stroke-width="1.300"/></svg>
    <div class="mark paused">暂停</div>
    <div class="mark site">更多课程:www.vipc9.com</div>
    <div class="mark contact">一手v：qianren03</div>

    <script>
        // the selected thumbnail is a scaled copy of the open slide
        const copy = document.getElementById('slide').cloneNode(true);
        copy.removeAttribute('id');
        document.getElementById('thumb16').appendChild(copy);
    </script>

</body>
</html>
```
FILE: styles.css
```css
* {
    box-sizing: border-box;
}

body {
    margin: 0;
    width: 1920px;
    height: 1080px;
    overflow: hidden;
    background-color: #171717;
    color: #333;
    font-family: "Noto Sans CJK SC", "Noto Sans", sans-serif;
    font-size: 14px;
    font-weight: 500;
}

svg {
    display: block;
    flex: none;
}

.defs {
    position: absolute;
    width: 0;
    height: 0;
}

.window {
    width: 1728px;
    height: 1080px;
    margin-left: 96px;
    background-color: #d4d4d4;
    display: flex;
    flex-direction: column;
    overflow: hidden;
}

/* title bar */
.titlebar {
    height: 54px;
    display: flex;
    align-items: center;
    background: linear-gradient(90deg, #d7d7d7, #cfcfcf 30%, #d2d2d2);
}

.title-left {
    width: 640px;
    padding-left: 17px;
    display: flex;
    align-items: center;
}

.autosave {
    margin-left: 18px;
    width: 62px;
}

.toggle {
    width: 51px;
    height: 24px;
    border: 1.5px solid #666;
    border-radius: 12px;
    background-color: #e2e2e2;
    display: flex;
    align-items: center;
    padding-left: 3px;
    gap: 8px;
    line-height: 1;
}

.toggle i {
    width: 17px;
    height: 17px;
    border-radius: 50%;
    background-color: #444;
}

.save {
    margin-left: 10px;
}

.doc-name {
    margin: 0 7px 0 34px;
}

.search {
    width: 466px;
    height: 37px;
    border: 1px solid #b5b5b5;
    border-bottom: 2px solid #a8a8a8;
    border-radius: 4px;
    background-color: #dedede;
    display: flex;
    align-items: center;
    padding-left: 24px;
    gap: 14px;
    font-weight: 400;
}

.title-right {
    flex: 1;
    display: flex;
    align-items: center;
    padding-left: 213px;
}

.user {
    font-family: "Noto Sans", sans-serif;
    margin-left: 11px;
    width: 118px;
    font-size: 14.300px;
    font-weight: 500;
    white-space: nowrap;
}

.avatar {
    width: 28px;
    height: 28px;
    border-radius: 50%;
    background-color: #0c5cb5;
    color: #a9c9ea;
    font-size: 10px;
    font-weight: 400;
    display: flex;
    align-items: center;
    justify-content: center;
}

.pen {
    margin-left: 31px;
}

.min {
    margin-left: 37px;
}

.max {
    margin: 0 43px 0 44px;
}

/* tabs */
.tabs {
    height: 36px;
    display: flex;
    align-items: center;
    gap: 20.900px;
    padding-left: 20px;
    font-size: 15.4px;
    background: linear-gradient(90deg, #d7d7d7, #cfcfcf 30%, #d2d2d2);
}

.tabs span {
    line-height: 24px;
    border-bottom: 3px solid transparent;
    margin-top: 1px;
    white-space: nowrap;
}

.tabs span:first-child {
    margin-right: 5px;
}

.tabs .active {
    font-weight: 700;
    color: #222;
    border-color: #b5401c;
}

.tab-actions {
    margin-left: auto;
    padding-right: 13px;
    display: flex;
    gap: 9px;
}

.tab-actions button {
    height: 28px;
    border: 1px solid #c2c2c2;
    border-radius: 4px;
    background-color: #e9e9e9;
    display: flex;
    align-items: center;
    justify-content: center;
    gap: 5px;
    padding: 0;
    font-family: inherit;
    font-size: 15px;
    line-height: 24px;
    font-weight: 700;
    color: #333;
}

.tab-actions .rec {
    width: 70px;
}

.tab-actions .comment {
    width: 37px;
}

.tab-actions .share {
    width: 71px;
    background-color: #b33a15;
    border-color: #b33a15;
    color: #f6dfd7;
}

/* ribbon */
.ribbon {
    height: 117px;
    margin: 0 9px;
    border-radius: 8px;
    background-color: #e8e8e8;
    box-shadow: 0 1px 2px #999;
    display: flex;
    position: relative;
    z-index: 1;
}

.group {
    position: relative;
    display: flex;
    flex-direction: column;
    flex: none;
}

.group::after {
    content: "";
    position: absolute;
    right: 0;
    top: 6px;
    height: 104px;
    width: 1px;
    background-color: #bdbdbd;
}

.g-undo { width: 70px; }
.g-clip { width: 114px; }
.g-slides { width: 161px; }
.g-font { width: 361px; }
.g-para { width: 268px; }
.g-draw { width: 403px; }
.g-edit { width: 102px; }
.g-voice { width: 67px; }
.g-designer { width: 67px; }

.body {
    height: 94px;
    padding-top: 3px;
    display: flex;
}

.label {
    height: 21px;
    line-height: 18px;
    text-align: center;
    position: relative;
}

.g-undo .label {
    padding-left: 3px;
}

.g-clip .label,
.g-font .label,
.g-para .label,
.g-draw .label {
    padding-right: 19px;
}

.launcher {
    position: absolute;
    right: 4px;
    top: 6px;
    width: 10px;
    height: 10px;
}

.g-font .launcher,
.g-para .launcher,
.g-draw .launcher {
    color: #777;
}

.row {
    height: 30px;
    display: flex;
    align-items: center;
    gap: 3px;
    white-space: nowrap;
}

.ic {
    width: 20px;
    height: 20px;
}

.ch {
    width: 8px;
    height: 8px;
}

.row .ch {
    margin-left: 2px;
}

.gray {
    color: #999;
    font-weight: 400;
}

.big {
    display: flex;
    flex-direction: column;
    align-items: center;
    line-height: 18px;
    padding-top: 5px;
}

.big span {
    white-space: nowrap;
}

.big > svg:first-child {
    margin-bottom: 5px;
    height: 34px;
}

.big .nw {
    display: flex;
    align-items: center;
    gap: 3px;
}

.big > .ch {
    margin-top: 4px;
}

.g-undo .body {
    flex-direction: column;
    padding-left: 17px;
}

.g-undo .ch {
    margin-left: 8px;
}

.g-clip .big {
    padding-left: 19px;
    width: 52px;
}

.g-clip .col {
    margin-left: 11px;
}

.g-clip .row .ch {
    margin-left: 4px;
}

.g-slides .big {
    padding-left: 18px;
    width: 60px;
}

.g-slides .nw {
    margin-left: 4px;
}

.g-slides .col {
    margin-left: 16px;
}

/* font */
.g-font .body {
    flex-direction: column;
    padding: 13px 0 0 8px;
    gap: 8px;
    color: #666;
}

.g-font .ch,
.g-para .ch {
    color: #888;
}

.line {
    display: flex;
    align-items: center;
}

.first {
    height: 28px;
}

.second {
    height: 30px;
}

.combo {
    height: 28px;
    border-radius: 5px;
    background-color: #cfcfcf;
    border: 1px solid #c6c6c6;
    display: flex;
    align-items: center;
    justify-content: flex-end;
    padding-right: 2px;
    gap: 3px;
    color: #888;
    font-size: 16px;
    font-weight: 400;
}

.combo i {
    width: 1px;
    height: 26px;
    background-color: #bdbdbd;
}

.combo span {
    margin-right: auto;
    padding-left: 3px;
}

.font-name {
    width: 192px;
}

.font-size {
    width: 56px;
    margin-left: 3px;
}

.grow,
.shrink {
    font-size: 20px;
    line-height: 1;
    display: flex;
    margin-left: 7px;
    font-weight: 400;
}

.shrink {
    font-size: 17px;
    margin-left: 12px;
}

.first small {
    font-size: 11px;
}

.bar {
    width: 1px;
    height: 27px;
    background-color: #c2c2c2;
}

.g-font .first .bar {
    margin: 0 7px 0 6px;
}

.second b,
.second em,
.second u,
.second s {
    width: 29.800px;
    text-align: center;
    font-size: 16px;
    flex: none;
}

.second em {
    font-family: "Liberation Serif", serif;
    font-size: 18px;
}

.second .shadow {
    text-shadow: 1px 1px 1px #aaa;
}

.second s {
    font-size: 14px;
}

.av {
    width: 30px;
    font-size: 15px;
    line-height: 15px;
    font-weight: 400;
    display: flex;
    flex-direction: column;
    align-items: center;
}

.second .av + .ch {
    margin-right: 15px;
}

.aa {
    width: 28px;
    font-size: 16px;
    letter-spacing: 1px;
}

.g-font .second .bar {
    margin: 0 5px 0 12px;
}

.g-font .second .wide {
    margin: 0 9px 0 8px;
}

/* paragraph */
.pi {
    width: 18px;
    height: 18px;
}

.lines {
    width: 210px;
    padding: 10px 0 0 14px;
}

.lines .second {
    margin-top: 8px;
    gap: 12px;
}

.lines .first .pi + .ch {
    margin: 0 12px 0 9px;
}

.lines .first .pi + .pi {
    margin-left: 12px;
}

.lines .first .ch.near {
    margin: 0 0 0 4px;
}

.lines .second .bar {
    margin: 0 -3px 0 -5px;
}

.lines .second .near {
    margin-left: -6px;
}

.g-para .col {
    margin-left: 7px;
}

.g-para .row .ch {
    margin-left: 3px;
}

/* drawing */
.gallery {
    width: 160px;
    height: 72px;
    margin: 10px 0 0 9px;
    border: 1px solid #c0c0c0;
    border-radius: 5px;
    display: flex;
    flex: none;
}

.shapes {
    width: 141px;
    padding: 0 0 0 1px;
    display: grid;
    grid-template-columns: repeat(6, 23.200px);
    grid-template-rows: repeat(3, 23.300px);
    place-items: center;
}

.shapes svg {
    width: 20px;
    height: 20px;
    fill: none;
    stroke: #555;
    stroke-width: 1.500;
}

.shapes .tb path {
    stroke: #1f6ea8;
}

.scroller {
    flex: 1;
    border-left: 1px solid #c0c0c0;
    display: grid;
    grid-template-rows: repeat(3, 1fr);
}

.scroller span {
    display: flex;
    align-items: center;
    justify-content: center;
    border-top: 1px solid #c0c0c0;
}

.scroller .up {
    border: none;
    color: #888;
    transform: rotate(180deg);
}

.arrange {
    width: 36px;
    margin-left: 10px;
}

.quick {
    width: 56px;
    margin-left: 11px;
}

.g-draw .col {
    margin-left: 9px;
}

.g-draw .row .ch {
    margin-left: 2px;
}

.g-edit .col {
    margin-left: 13px;
}

.g-edit .row {
    gap: 4px;
}

.g-edit .row .far {
    margin-left: 9px;
}

.g-edit .row .ch:not(.far) {
    margin-left: -1px;
}

.g-voice .body,
.g-designer .body {
    justify-content: center;
}

.collapse {
    position: absolute;
    right: 11px;
    bottom: 12px;
}

/* work area */
.work {
    height: 792px;
    display: flex;
}

.thumbs {
    width: 301px;
    display: flex;
    overflow: hidden;
    border-right: 1px solid #bcbcbc;
    background-color: #d5d5d5;
}

.thumb-list {
    list-style: none;
    margin: -118px 0 0;
    padding: 0 0 0 3px;
    width: 283px;
}

.item {
    display: flex;
    height: 144.400px;
    gap: 18px;
}

.num {
    width: 22px;
    margin-top: -6px;
    font-size: 19px;
    line-height: 22px;
    font-family: "Noto Sans", sans-serif;
    font-weight: 500;
    color: #444;
    text-align: right;
}

.num svg {
    width: 12px;
    height: 10px;
    margin: 2px 0 0 10px;
}

.thumb {
    width: 213px;
    height: 121px;
    flex: none;
    border: 1px solid #b2b2b2;
    border-radius: 4px;
    background-color: #e9e9e9;
    box-shadow: 0 1px 1px #aaa;
    overflow: hidden;
    position: relative;
}

.thumb > svg {
    width: 211px;
    height: 120px;
    font-size: 4.300px;
    fill: #333;
    font-weight: 500;
}

.thumb .t {
    font-size: 7.300px;
    font-weight: 700;
    fill: #1d5388;
}

.cells,
.wide-text {
    font-size: 5.200px;
}

.card {
    font-size: 4.800px;
    font-weight: 700;
}

.note {
    font-size: 3px;
}

.ring {
    font-size: 6px;
    fill: #555;
}

.q {
    font-size: 6px;
    font-weight: 700;
}

.current .num {
    color: #b5492a;
}

.current .thumb {
    width: 219px;
    height: 127px;
    margin: -3px 0 0 -3px;
    border: 3.500px solid #a04526;
    border-radius: 7px;
}

.current .slide {
    transform: scale(0.168);
    transform-origin: 0 0;
    margin: 0;
    outline: none;
    position: absolute;
    left: 0;
    top: 0;
}

.scroll {
    display: flex;
    flex-direction: column;
    align-items: center;
    fill: #4d4d4d;
}

.scroll i {
    width: 10px;
    border-radius: 5px;
    background-color: #555;
}

.left-scroll {
    width: 10px;
    padding: 6px 0;
}

.left-scroll i {
    height: 108px;
    margin: 243px 0 413px;
}

.editor {
    flex: 1;
    display: flex;
    flex-direction: column;
    min-width: 0;
}

.canvas {
    height: 741px;
    display: flex;
    background: linear-gradient(90deg, #cfcfcf, #d6d6d6);
}

.right-scroll {
    width: 18px;
    margin-left: auto;
    border-left: 1px solid #c2c2c2;
    background-color: #d3d3d3;
    padding: 6px 3px 0 0;
}

.right-scroll i {
    height: 20px;
    margin-top: 257px;
}

.pages {
    margin-top: 374px;
}

.notes {
    height: 51px;
    border-top: 1px solid #bebebe;
    border-bottom: 1px solid #e4e4e4;
    padding: 7px 0 0 13px;
    font-size: 17px;
    line-height: 20px;
    font-weight: 400;
    color: #4c4c4c;
    background-color: #d7d7d7;
}

/* slide, objects are placed freely on the canvas */
.slide {
    position: relative;
    width: 1266px;
    height: 713px;
    flex: none;
    margin: 13px 0 0 72px;
    background-color: #e9e9e9;
    outline: 1px solid #c2c2c2;
    color: #252525;
    font-weight: 400;
}

.slide h1 {
    position: absolute;
    left: 83px;
    top: 18px;
    margin: 0;
    font-size: 43px;
    line-height: 56px;
    font-weight: 900;
    letter-spacing: -0.900px;
    word-spacing: 4px;
    color: #17528e;
    white-space: nowrap;
}

.slide span {
    letter-spacing: -0.045em;
}

.case {
    position: absolute;
    left: 86px;
    top: 94px;
    margin: 0;
    font-size: 23.800px;
    line-height: 28.500px;
    color: #bb6534;
    white-space: nowrap;
}

.slide .case span {
    letter-spacing: -0.075em;
}

.diagram {
    position: absolute;
    left: 0;
    top: 0;
}

.node {
    font-size: 23px;
    fill: #cfdce8;
    font-weight: 300;
}

.edge {
    font-size: 23.500px;
    fill: #303030;
}

.points {
    position: absolute;
    left: 86px;
    top: 536px;
    margin: 0;
    padding: 0;
    list-style: none;
    counter-reset: n;
    font-size: 26.400px;
    line-height: 32px;
    font-weight: 500;
    white-space: nowrap;
}

.points li {
    display: flex;
    counter-increment: n;
}

.points li::before {
    content: counter(n) ".";
    width: 47px;
}

.slide .points span {
    letter-spacing: -0.010em;
}

.panel {
    position: absolute;
    top: 153px;
    width: 195px;
    height: 445px;
    background-color: #b6c2d2;
    white-space: nowrap;
    color: #29323e;
}

.result {
    left: 737px;
    padding: 66px 0 0 31px;
    font-size: 23.600px;
    line-height: 28.900px;
}

.rule {
    left: 1051px;
    padding: 59px 0 0 31px;
    font-size: 26.200px;
    line-height: 32px;
}

.disc {
    position: absolute;
    top: 105px;
    width: 122px;
    height: 122px;
    border: 2px solid #30365f;
    border-radius: 50%;
    background-color: #e9e9ec;
    font-size: 41px;
    line-height: 108px;
    text-align: center;
    color: #1f2452;
}

.d1 { left: 656px; }
.d2 { left: 969px; }

/* status bar */
.status {
    height: 26px;
    padding-left: 8px;
    display: flex;
    align-items: center;
    background-color: #dedede;
    font-size: 14px;
    font-weight: 400;
    white-space: nowrap;
    border-bottom: 1px solid #b8bcbc;
}

.page-no {
    width: 201px;
    letter-spacing: 0.300px;
}

.lang {
    width: 83px;
}

.acc {
    margin-right: 4px;
}

.status-right {
    margin-left: auto;
    display: flex;
    align-items: center;
    height: 25px;
}

.s-notes {
    margin-right: 3px;
}

.t-notes {
    width: 44px;
}

.s-disp {
    margin-right: 2px;
}

.t-disp {
    width: 90px;
}

.view {
    width: 46.300px;
    height: 25px;
    display: flex;
    align-items: center;
    justify-content: center;
}

.view svg {
    fill: none;
    stroke: #444;
    stroke-width: 1.500;
}

.on {
    background-color: #c0c0c0;
}

.minus {
    width: 22px;
    text-align: center;
}

.zoom-track {
    width: 114px;
    height: 2px;
    background: linear-gradient(90deg, #666 0 56px, #333 56px 58px, #666 58px);
    position: relative;
}

.zoom-track i {
    position: absolute;
    left: 45px;
    top: -7px;
    width: 6px;
    height: 16px;
    background-color: #555;
}

.plus {
    width: 28px;
    padding-left: 6px;
    font-size: 16px;
}

.pct {
    width: 45px;
}

.fit {
    margin-right: 4px;
}

/* taskbar */
.taskbar {
    height: 55px;
    display: flex;
    align-items: center;
    background: linear-gradient(90deg, #d5d4d2 0, #d1d4d5 250px, #c2ccd6 420px, #b8c1cd 640px, #b6bfce 840px, #b6c2c9 980px, #b0cba9 1065px, #afcfb0 1100px, #a9c8cb 1130px, #b7c0cf 1185px, #c6bdcc 1240px, #b7c0d2 1290px, #b9c9d5 1330px, #d1d5d3 1375px, #d4d6d2);
}

.weather {
    width: 665px;
    padding-left: 31px;
    display: flex;
    align-items: center;
    gap: 9px;
    line-height: 18px;
    font-weight: 400;
}

.apps {
    display: flex;
    gap: 9px;
}

.apps span {
    width: 42px;
    height: 44px;
    display: flex;
    align-items: center;
    justify-content: center;
    position: relative;
    border-radius: 4px;
}

.run::after {
    content: "";
    position: absolute;
    bottom: 0;
    width: 7px;
    height: 4px;
    border-radius: 2px;
    background-color: #596373;
}

.apps .now {
    background-color: #d3d9e2;
}

.now::after {
    width: 19px;
    background-color: #165ba4;
}

.tray {
    margin-left: auto;
    padding-right: 23px;
    display: flex;
    align-items: center;
}

.onedrive { margin-left: 12px; }
.mic { margin-left: 15px; }

.ime {
    margin-left: 21px;
    font-size: 18px;
}

.wifi { margin-left: 20px; }
.vol { margin-left: 9px; }
.bat { margin-left: 9px; }

.clock {
    width: 75px;
    text-align: right;
    font-size: 14px;
    line-height: 18px;
    letter-spacing: -0.300px;
    font-weight: 400;
}

/* overlays */
.pointer {
    position: absolute;
    left: 993px;
    top: 580px;
}

.mark {
    position: absolute;
    white-space: nowrap;
    font-weight: 400;
}

.paused {
    left: 12px;
    top: 9px;
    font-size: 18.500px;
    line-height: 26px;
    color: #4469e8;
    font-weight: 500;
}

.site {
    left: 236px;
    top: 889px;
    font-size: 20px;
    line-height: 28px;
    color: #d07262;
}

.contact {
    left: 1691px;
    top: 858px;
    font-size: 18.900px;
    line-height: 28px;
    color: #d0524a;
}
```
